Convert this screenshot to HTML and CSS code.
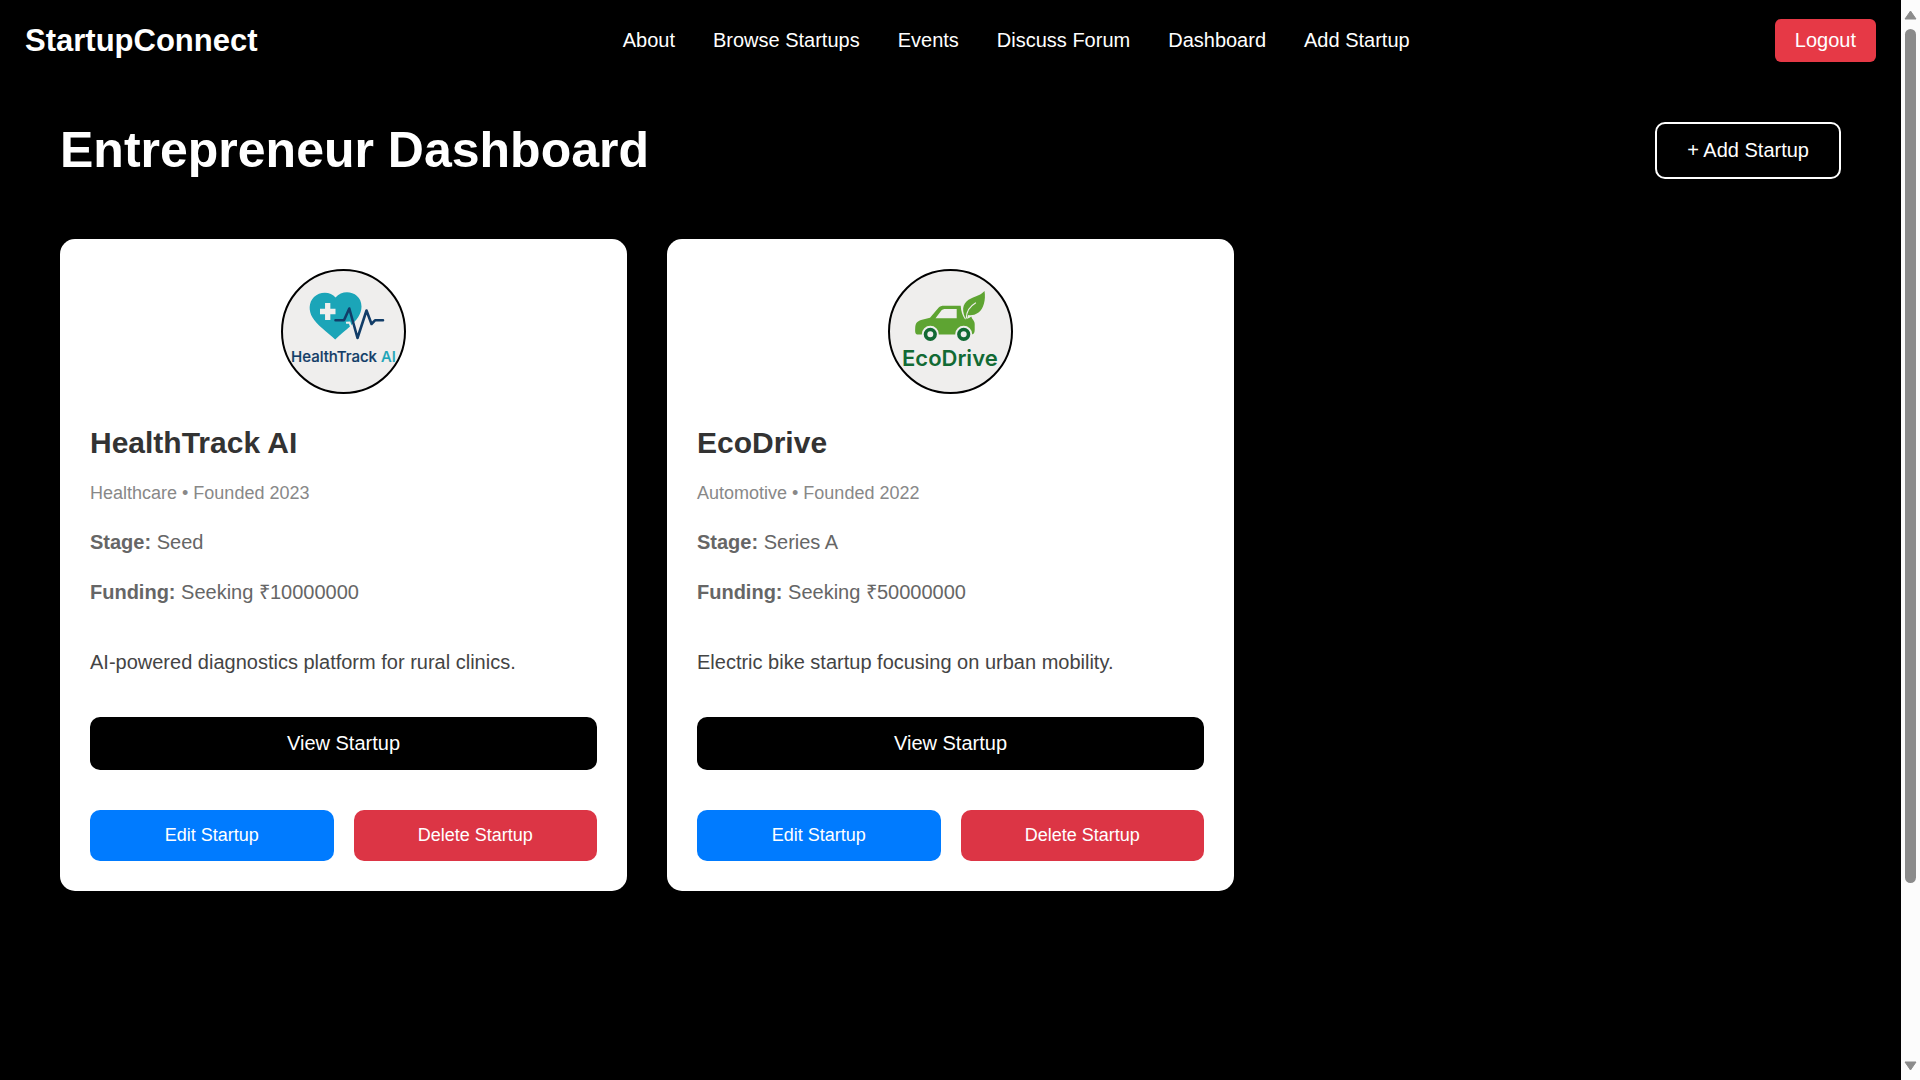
FILE: index.html
```html
<!DOCTYPE html>
<html lang="en">
<head>
<meta charset="utf-8">
<meta name="viewport" content="width=device-width, initial-scale=1">
<title>StartupConnect</title>
<link rel="stylesheet" href="styles.css">
</head>
<body>
<div class="page">
  <header class="navbar">
    <a class="brand" href="#">StartupConnect</a>
    <nav class="nav-links">
      <a href="#">About</a>
      <a href="#">Browse Startups</a>
      <a href="#">Events</a>
      <a href="#">Discuss Forum</a>
      <a href="#">Dashboard</a>
      <a href="#">Add Startup</a>
    </nav>
    <button class="logout" type="button">Logout</button>
  </header>

  <main class="dashboard">
    <div class="dashboard-header">
      <h1>Entrepreneur Dashboard</h1>
      <button class="add-startup" type="button">+ Add Startup</button>
    </div>

    <div class="cards">
      <article class="card">
        <svg class="logo" viewBox="0 0 125 125" role="img" aria-label="HealthTrack AI logo">
          <circle class="logo-disc" cx="62.5" cy="62.5" r="61.5"/>
          <path fill="#1ba5b8" d="M54.5 28.5C50 22.500 39 22 33 28C27.500 33.500 27.500 42 31.500 48.500C36 56 45.500 62.500 54.200 70.500C59.500 65.500 65 61 70 56.500C75 51.500 80.500 45.500 80.500 37.500C80.500 23 62.500 19 54.500 28.500Z"/>
          <path fill="none" stroke="#efeeed" stroke-width="5.300" d="M46.700 34V51M39 42.500H54.500"/>
          <path fill="none" stroke="#efeeed" stroke-width="2" d="M65 53.800L68.500 53.500L73 66"/>
          <path fill="none" stroke="#123d68" stroke-width="2.600" stroke-linecap="round" stroke-linejoin="round" d="M54.500 51.300H63L68.300 39.500L76.500 69L85.500 41.500L90.500 55L94 51.300H102"/>
          <text class="health-word" x="10" y="93">HealthTrack</text>
          <text class="health-ai" x="100" y="93">AI</text>
        </svg>
        <h2>HealthTrack AI</h2>
        <p class="meta">Healthcare • Founded 2023</p>
        <p class="detail"><strong>Stage:</strong> Seed</p>
        <p class="detail"><strong>Funding:</strong> Seeking ₹10000000</p>
        <p class="description">AI-powered diagnostics platform for rural clinics.</p>
        <button class="view" type="button">View Startup</button>
        <div class="actions">
          <button class="edit" type="button">Edit Startup</button>
          <button class="delete" type="button">Delete Startup</button>
        </div>
      </article>

      <article class="card">
        <svg class="logo" viewBox="0 0 125 125" role="img" aria-label="EcoDrive logo">
          <circle class="logo-disc" cx="62.5" cy="62.5" r="61.5"/>
          <path fill="#5ea432" fill-rule="evenodd" d="M30 65.500C27 65.500 27 63 27.200 59C27.500 54 29 52 34 50.700L42 48.700L50.500 38.700C52 37.200 53.500 36.700 56 36.700H72.700C73 42 74.300 46.500 77 50.300C79.500 50 81.500 49 83.300 47.500C84 50.500 86.700 51.500 86.700 55V61C86.700 64 85.500 65.500 83 65.500ZM47.500 49.300H68.700V40H58C55.500 40 54 40.500 53 42Z"/>
          <path fill="#5ea432" d="M77.500 49.500C72.500 39 76 32.500 83 29.500C88.500 27 93 26 96.500 22C98 31 95.500 40 90.500 43.500C86.500 46.300 83 46.500 80.200 46C79.500 47.500 79.200 49 79 50.500Z"/>
          <path fill="none" stroke="#efeeed" stroke-width="1.200" stroke-linecap="round" d="M78.300 49C78.500 42.500 81.500 37.500 87.500 34"/>
          <g fill="#efeeed" stroke="#efeeed" stroke-width="4"><circle cx="42.300" cy="65.300" r="6.500"/><circle cx="75.700" cy="65.300" r="6.500"/></g>
          <g fill="#efeeed" stroke="#126a34" stroke-width="3.600"><circle cx="42.300" cy="65.300" r="4.800"/><circle cx="75.700" cy="65.300" r="4.800"/></g>
          <text class="eco-word" x="14" y="97">EcoDrive</text>
        </svg>
        <h2>EcoDrive</h2>
        <p class="meta">Automotive • Founded 2022</p>
        <p class="detail"><strong>Stage:</strong> Series A</p>
        <p class="detail"><strong>Funding:</strong> Seeking ₹50000000</p>
        <p class="description">Electric bike startup focusing on urban mobility.</p>
        <button class="view" type="button">View Startup</button>
        <div class="actions">
          <button class="edit" type="button">Edit Startup</button>
          <button class="delete" type="button">Delete Startup</button>
        </div>
      </article>
    </div>
  </main>
</div>

<div class="scrollbar" aria-hidden="true">
  <svg class="arrow" viewBox="0 0 13 10"><path d="M6.500 1L12 9H1Z"/></svg>
  <div class="track"><div class="thumb"></div></div>
  <svg class="arrow" viewBox="0 0 13 10"><path d="M6.500 9L12 1H1Z"/></svg>
</div>
</body>
</html>
```
FILE: styles.css
```css
* {
  box-sizing: border-box;
}

body {
  display: grid;
  grid-template-columns: minmax(0, 1fr) 19px;
  min-height: 100vh;
  margin: 0;
  background: #000;
  color: #fff;
  font-family: "Liberation Sans", Arial, sans-serif;
  font-size: 20px;
  line-height: 23px;
}

a {
  color: inherit;
  text-decoration: none;
}

button {
  border: 0;
  color: #fff;
  font: inherit;
  cursor: pointer;
}

h1,
h2,
p {
  margin: 0;
}

/* Navigation */
.navbar {
  display: flex;
  align-items: center;
  justify-content: space-between;
  padding: 19px 25px;
}

.brand {
  font-size: 31px;
  line-height: 35px;
  font-weight: bold;
}

.nav-links {
  display: flex;
  gap: 38px;
}

.logout {
  padding: 10px 20px;
  border-radius: 6px;
  background: #e63946;
}

/* Dashboard */
.dashboard {
  padding: 40px 60px;
}

.dashboard-header {
  display: flex;
  align-items: center;
  justify-content: space-between;
  margin-bottom: 60px;
}

h1 {
  font-size: 50px;
  line-height: 58px;
}

.add-startup {
  padding: 15px 30px;
  border: 2px solid #fff;
  border-radius: 10px;
  background: transparent;
}

.cards {
  display: grid;
  grid-template-columns: repeat(3, minmax(0, 1fr));
  gap: 40px;
}

.card {
  display: flex;
  flex-direction: column;
  padding: 30px;
  border-radius: 15px;
  background: #fff;
}

.logo {
  align-self: center;
  width: 125px;
  height: 125px;
  margin-bottom: 31px;
}

.logo-disc {
  fill: #efeeed;
  stroke: #000;
  stroke-width: 2;
}

.health-word,
.health-ai {
  font: 500 15px Inter, sans-serif;
  fill: #123d68;
  stroke: #123d68;
  stroke-width: 0.2px;
}

.health-ai {
  fill: #1ba5b8;
  stroke: #1ba5b8;
}

.eco-word {
  font: 600 22px Inter, sans-serif;
  fill: #126a34;
}

.card h2 {
  margin-bottom: 22px;
  color: #333;
  font-size: 30px;
  line-height: 36px;
}

.meta {
  margin-bottom: 28px;
  color: #888;
  font-size: 18px;
  line-height: 20px;
}

.detail {
  margin-bottom: 27px;
  color: #666;
}

.description {
  margin: 16px 0 40px;
  color: #444;
  line-height: 30px;
}

.view {
  padding: 15px;
  border-radius: 10px;
  background: #000;
}

.actions {
  display: grid;
  grid-template-columns: 1fr 1fr;
  gap: 20px;
  margin-top: 40px;
}

.edit,
.delete {
  padding: 14px;
  border-radius: 10px;
  font-size: 18px;
}

.edit {
  background: #007bff;
}

.delete {
  background: #dc3545;
}

/* Scrollbar */
.scrollbar {
  display: flex;
  flex-direction: column;
  align-items: center;
  gap: 9px;
  padding: 10px 0 9px;
  background: #fcfcfc;
}

.arrow {
  width: 13px;
  height: 10px;
  fill: #8b8b8b;
  stroke: #8b8b8b;
  stroke-width: 1;
  stroke-linejoin: round;
}

.track {
  flex: 1;
}

.thumb {
  width: 11px;
  height: 83.5%;
  border-radius: 6px;
  background: #8b8b8b;
}
```
